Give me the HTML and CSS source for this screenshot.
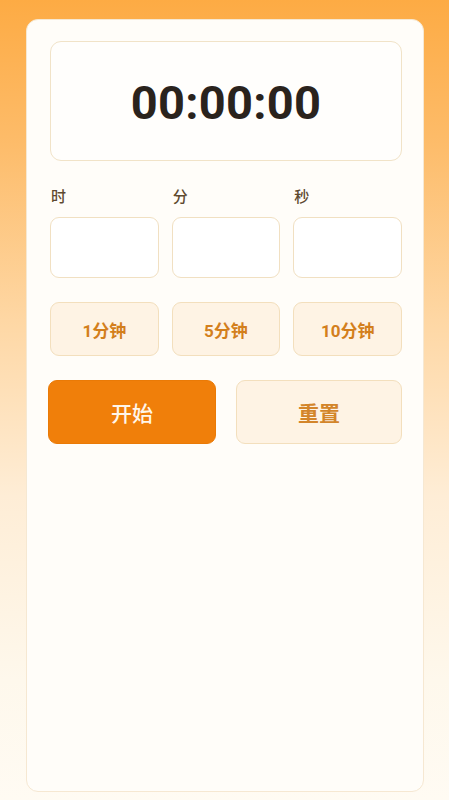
FILE: index.html
```html
<!DOCTYPE html>
<html lang="zh">
<head>
<meta charset="utf-8">
<title>倒计时</title>
<link rel="stylesheet" href="styles.css">
</head>
<body>
<div class="page">
  <main class="card">
    <div class="display"><span class="time">00:00:00</span></div>
    <div class="fields">
      <label class="field"><span class="field-label">时</span><input class="field-input" type="text"></label>
      <label class="field"><span class="field-label">分</span><input class="field-input" type="text"></label>
      <label class="field"><span class="field-label">秒</span><input class="field-input" type="text"></label>
    </div>
    <div class="presets">
      <button class="preset">1分钟</button>
      <button class="preset">5分钟</button>
      <button class="preset">10分钟</button>
    </div>
    <div class="actions">
      <button class="btn btn-start">开始</button>
      <button class="btn btn-reset">重置</button>
    </div>
  </main>
</div>
</body>
</html>
```

FILE: styles.css
```css
html, body {
  margin: 0;
  padding: 0;
  height: 100%;
}
body {
  font-family: Roboto, "Noto Sans CJK SC", "Noto Sans", sans-serif;
  background: linear-gradient(180deg, #fdab44 0%, #fdbc6a 18%, #fed7a4 40%, #feedd6 62%, #fef8ec 85%, #fffbf3 100%);
}
.page {
  box-sizing: border-box;
  height: 800px;
  padding: 19px 25px 8px 26px;
  display: flex;
}
.card {
  flex: 1;
  box-sizing: border-box;
  background: #fffdf9;
  border: 1px solid #f6e8d2;
  border-radius: 12px;
  padding: 21px 21px 0 23px;
  display: flex;
  flex-direction: column;
}
.display {
  height: 120px;
  box-sizing: border-box;
  border: 1.5px solid #f1e3c8;
  border-radius: 11px;
  background: #fffefc;
  display: flex;
  align-items: center;
  justify-content: center;
}
.time {
  font-family: Roboto, sans-serif;
  font-weight: 700;
  font-size: 47px;
  color: #2a231d;
  letter-spacing: 0.3px;
  margin-top: 2px;
}
.fields, .presets {
  display: grid;
  grid-template-columns: repeat(3, 1fr);
  column-gap: 13px;
}
.fields {
  margin-top: 25px;
}
.field {
  display: flex;
  flex-direction: column;
}
.field-label {
  font-family: "Noto Sans CJK SC", sans-serif;
  font-size: 15px;
  font-weight: 500;
  line-height: 20px;
  color: #5e4a30;
  margin-bottom: 11px;
  padding-left: 1px;
}
.field-input {
  height: 61px;
  box-sizing: border-box;
  border: 1.5px solid #f1e0c2;
  border-radius: 9px;
  background: #ffffff;
  outline: none;
  width: 100%;
  min-width: 0;
}
.presets {
  margin-top: 24px;
}
.preset {
  height: 54px;
  box-sizing: border-box;
  border: 1.5px solid #f3dfbd;
  border-radius: 9px;
  background: #fef3e4;
  font-family: Roboto, "Noto Sans CJK SC", sans-serif;
  font-size: 17px;
  font-weight: 700;
  color: #d37f1c;
  padding: 0;
}
.actions {
  margin-top: 24px;
  display: grid;
  grid-template-columns: 1fr 1fr;
  column-gap: 20px;
}
.btn {
  height: 64px;
  box-sizing: border-box;
  border-radius: 9px;
  font-family: "Noto Sans CJK SC", sans-serif;
  font-size: 21px;
  font-weight: 500;
  padding: 0;
}
.btn-start {
  background: #f07f0a;
  border: 1px solid #ea7a06;
  color: #fff6ea;
  margin-left: -2px;
}
.btn-reset {
  background: #fef3e4;
  border: 1.5px solid #f3dfbd;
  color: #d3852a;
  font-weight: 700;
}
```
